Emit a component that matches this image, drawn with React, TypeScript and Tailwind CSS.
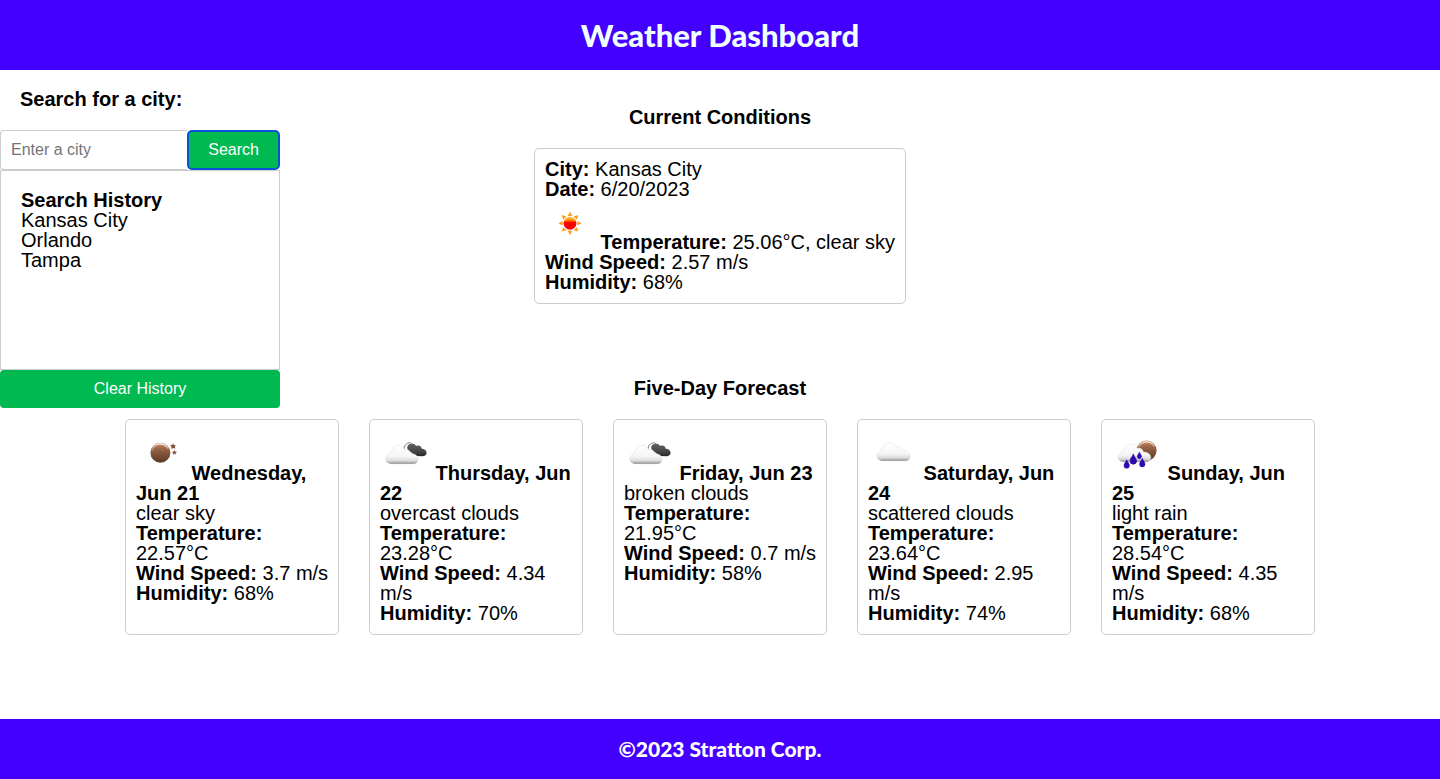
import type { ReactNode } from "react";

type IconName = "sun" | "moon" | "clouds" | "cloud" | "rain";

interface Forecast {
  day: string;
  icon: IconName;
  summary: string;
  temperature: string;
  wind: string;
  humidity: string;
}

const history = ["Kansas City", "Orlando", "Tampa"];

const forecast: Forecast[] = [
  { day: "Wednesday, Jun 21", icon: "moon", summary: "clear sky", temperature: "22.57°C", wind: "3.7 m/s", humidity: "68%" },
  { day: "Thursday, Jun 22", icon: "clouds", summary: "overcast clouds", temperature: "23.28°C", wind: "4.34 m/s", humidity: "70%" },
  { day: "Friday, Jun 23", icon: "clouds", summary: "broken clouds", temperature: "21.95°C", wind: "0.7 m/s", humidity: "58%" },
  { day: "Saturday, Jun 24", icon: "cloud", summary: "scattered clouds", temperature: "23.64°C", wind: "2.95 m/s", humidity: "74%" },
  { day: "Sunday, Jun 25", icon: "rain", summary: "light rain", temperature: "28.54°C", wind: "4.35 m/s", humidity: "68%" },
];

const rays = [0, 45, 90, 135, 180, 225, 270, 315];

function Gradients() {
  return (
    <svg width="0" height="0" className="absolute" aria-hidden="true">
      <defs>
        <linearGradient id="cloudFill" x1="0" y1="0" x2="0" y2="1">
          <stop offset="0" stopColor="#ffffff" />
          <stop offset="0.6" stopColor="#f6f6f6" />
          <stop offset="0.84" stopColor="#dcdcdc" />
          <stop offset="0.94" stopColor="#acacac" />
          <stop offset="1" stopColor="#6e6e6e" />
        </linearGradient>
        <linearGradient id="darkFill" x1="0" y1="0" x2="0" y2="1">
          <stop offset="0" stopColor="#626262" />
          <stop offset="0.6" stopColor="#464646" />
          <stop offset="1" stopColor="#282828" />
        </linearGradient>
        <linearGradient id="moonFill" x1="0" y1="0" x2="0" y2="1">
          <stop offset="0" stopColor="#d09270" />
          <stop offset="0.3" stopColor="#9c6646" />
          <stop offset="0.6" stopColor="#7c5038" />
          <stop offset="1" stopColor="#5a3925" />
        </linearGradient>
        <linearGradient id="moonShine" x1="0" y1="0" x2="0" y2="1">
          <stop offset="0" stopColor="#ffffff" stopOpacity="0.9" />
          <stop offset="1" stopColor="#ffffff" stopOpacity="0" />
        </linearGradient>
        <linearGradient id="sunFill" x1="0" y1="0" x2="0" y2="1">
          <stop offset="0" stopColor="#ffb400" />
          <stop offset="0.2" stopColor="#ff9000" />
          <stop offset="0.38" stopColor="#f83c00" />
          <stop offset="0.42" stopColor="#ff0000" />
          <stop offset="1" stopColor="#ff0000" />
        </linearGradient>
      </defs>
    </svg>
  );
}

const cloudPath =
  "M6.5 19C3.5 19 0.5 17.6 0.5 14.3C0.5 11.6 2.2 9.8 4.3 9.3C4.2 7 5.5 5.5 7.3 5C8.3 2 10.4 0.5 13.2 0.5C16.5 0.5 18.6 2.3 19.6 5C22.5 4 25.4 5.6 26 8.8C29.6 8.4 33.5 10.8 33.5 14.4C33.5 17.4 31.4 19 28.5 19Z";

function Moon({ cx, cy }: { cx: number; cy: number }) {
  return (
    <g transform={`translate(${cx} ${cy})`}>
      <circle r="10" fill="url(#moonFill)" />
      <path d="M-8.4 -0.8A8.4 8.4 0 0 1 7.6 -3.8" fill="none" stroke="url(#moonShine)" strokeWidth="1.4" />
    </g>
  );
}

function drop(x: number, y: number, s: number) {
  return (
    <path
      key={`${x}-${y}`}
      transform={`translate(${x} ${y}) scale(${s})`}
      d="M0 -5C0.6 -2.8 3.2 -0.6 3.2 1.9A3.2 3.2 0 0 1 -3.2 1.9C-3.2 -0.6 -0.6 -2.8 0 -5Z"
      fill="#3206b4"
      stroke="#1d0590"
      strokeWidth="0.6"
    />
  );
}

const drawings: Record<IconName, ReactNode> = {
  sun: (
    <g transform="translate(25 24.3)">
      {rays.map((a) => (
        <path key={a} transform={`rotate(${a})`} d="M0 -11.6L2.3 -7.4L-2.3 -7.4Z" fill="#ff9c14" />
      ))}
      <circle r="6.4" fill="url(#sunFill)" />
      <path d="M-4.8 -2.2A5.3 5.3 0 0 1 4.8 -2.2" fill="none" stroke="#ffc34d" strokeWidth="0.8" />
    </g>
  ),
  moon: (
    <>
      <Moon cx={24.4} cy={22.7} />
      <path d="M37 13.2L37.9 15.2L40 15.1L38.7 16.8L39.5 18.8L37.3 17.9L35.3 19.1L35.6 16.8L34.1 15.3L36.2 15.1Z" fill="#804c34" />
      <path d="M38.4 20L39.2 21.6L41 21.8L39.8 23L40.1 24.7L38.4 23.8L36.7 24.7L37 23L35.8 21.8L37.6 21.6Z" fill="#8d5d45" />
    </>
  ),
  clouds: (
    <>
      <path d="M23.6 20C24.3 15.5 26.6 12.8 29.4 12.8C31.2 12.8 32.2 13.7 32.6 15" fill="none" stroke="#777777" strokeWidth="1" />
      <path
        d="M27.2 17.6C27.2 15.3 29 13.7 31 14C33.6 13 35.4 14.2 36.2 16C38.6 14.8 41.4 16 41.8 18.8C44.6 18.8 46.6 20.6 46.6 22.8C46.6 25 44.8 26.2 42.6 26.2L36.4 26C33.5 26.2 32 24.5 31.8 22.6C29 21.8 27.2 19.9 27.2 17.6Z"
        fill="url(#darkFill)"
      />
      <path transform="translate(5.3 14.8) scale(0.98 1)" d={cloudPath} fill="url(#cloudFill)" stroke="#c8c8c8" strokeWidth="0.3" />
    </>
  ),
  cloud: <path transform="translate(8.4 11.8) scale(1.01 1)" d={cloudPath} fill="url(#cloudFill)" stroke="#c8c8c8" strokeWidth="0.3" />,
  rain: (
    <>
      <Moon cx={34.6} cy={20.6} />
      <path transform="translate(5.7 13.6) scale(0.99 0.96)" d={cloudPath} fill="url(#cloudFill)" stroke="#c8c8c8" strokeWidth="0.3" />
      {drop(14.7, 34, 0.85)}
      {drop(21.3, 29, 1.02)}
      {drop(27.4, 25.3, 0.68)}
      {drop(30.3, 32.6, 0.85)}
    </>
  ),
};

function WeatherIcon({ name, label }: { name: IconName; label: string }) {
  return (
    <svg viewBox="0 0 50 50" role="img" aria-label={label} className="inline size-[50px] align-baseline">
      {drawings[name]}
    </svg>
  );
}

function Line({ label, children }: { label: string; children: ReactNode }) {
  return (
    <p>
      <strong>{label}:</strong> {children}
    </p>
  );
}

export default function App() {
  return (
    <div className="flex min-h-screen flex-col bg-white font-['Liberation_Sans',Arial,sans-serif] text-xl/5 text-black">
      <Gradients />
      <header className="flex h-[70px] items-center justify-center bg-[#4400ff] font-['Trebuchet_MS',Lato,sans-serif] text-[31px] font-black text-[#f0ffff]">
        <h1>Weather Dashboard</h1>
      </header>

      <main className="flex-1">
        <div className="grid grid-cols-[280px_1fr_280px]">
          <aside className="pt-[19px]">
            <form onSubmit={(e) => e.preventDefault()}>
              <label htmlFor="city" className="block px-5 pb-[21px] font-bold">
                Search for a city:
              </label>
              <div className="flex h-10">
                <input
                  id="city"
                  type="text"
                  placeholder="Enter a city"
                  className="min-w-0 flex-1 rounded-l border border-r-0 border-[#cccccc] px-2.5 text-base placeholder:text-[#757575]"
                />
                <button type="submit" className="rounded-[5px] border-2 border-[#0a50d8] bg-[#00b950] px-[19px] text-base text-white">
                  Search
                </button>
              </div>
            </form>
            <section className="h-[200px] border border-[#cccccc] px-5 pt-[19px]">
              <h2 className="font-bold">Search History</h2>
              <ul>
                {history.map((city) => (
                  <li key={city}>{city}</li>
                ))}
              </ul>
            </section>
            <button type="button" className="h-[38px] w-full rounded bg-[#00b950] text-base text-white">
              Clear History
            </button>
          </aside>

          <div className="flex flex-col items-center pt-[37px]">
            <h2 className="mb-[21px] font-bold">Current Conditions</h2>
            <section className="rounded-[5px] border border-[#cccccc] px-2.5 pt-2.5 pb-[11px]">
              <Line label="City">Kansas City</Line>
              <Line label="Date">6/20/2023</Line>
              <p>
                <WeatherIcon name="sun" label="clear sky" /> <strong>Temperature:</strong> 25.06°C, clear sky
              </p>
              <Line label="Wind Speed">2.57 m/s</Line>
              <Line label="Humidity">68%</Line>
            </section>
            <h2 className="mt-[74px] mb-[21px] font-bold">Five-Day Forecast</h2>
          </div>
        </div>

        <div className="flex justify-center gap-[30px] pb-5">
          {forecast.map((f) => (
            <article key={f.day} className="w-[214px] rounded-[5px] border border-[#cccccc] pt-2.5 pr-2 pb-[11px] pl-2.5">
              <h3 className="font-bold">
                <WeatherIcon name={f.icon} label={f.summary} /> {f.day}
              </h3>
              <p>{f.summary}</p>
              <Line label="Temperature">{f.temperature}</Line>
              <Line label="Wind Speed">{f.wind}</Line>
              <Line label="Humidity">{f.humidity}</Line>
            </article>
          ))}
        </div>
      </main>

      <footer className="flex h-[60px] items-center justify-center bg-[#4400ff] font-['Trebuchet_MS',Lato,sans-serif] text-[21px] font-black text-white">
        <p>©2023 Stratton Corp.</p>
      </footer>
    </div>
  );
}
